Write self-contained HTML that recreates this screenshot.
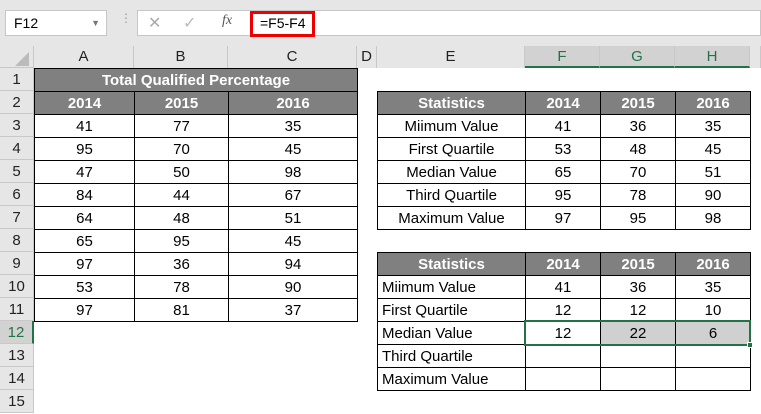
<!DOCTYPE html><html><head><style>
body{margin:0;width:761px;height:414px;overflow:hidden;background:#fff;font-family:"Liberation Sans",sans-serif;position:relative}
.a{position:absolute;box-sizing:border-box}
.t{position:absolute;border-collapse:collapse;table-layout:fixed;font-size:15px;background:#fff}
.t td{border:1px solid #000;height:22px;padding:0;text-align:center;white-space:nowrap;overflow:hidden}
.t td.h{background:#808080;color:#fff;font-weight:bold}
.t td.l{text-align:left;padding-left:4px}
.ch{position:absolute;top:46px;height:22px;border-right:1px solid #c8c8c8;background:#e6e6e6;text-align:center;font-size:15px;line-height:22px;color:#222;box-sizing:border-box}
.rh{position:absolute;left:0;width:34px;height:23px;border-bottom:1px solid #c8c8c8;border-right:1px solid #c8c8c8;background:#e6e6e6;text-align:center;font-size:15px;line-height:23px;color:#222;box-sizing:border-box}
.sel{background:#d2d2d2;color:#217346;border-bottom:2px solid #217346}
</style></head><body>
<div class="a" style="left:0;top:0;width:761px;height:46px;background:#e6e6e6"></div>
<div class="a" style="left:5px;top:10px;width:102px;height:26px;background:#fff;border:1px solid #c6c6c6;font-size:14px;line-height:24px;padding-left:8px">F12<span style="position:absolute;right:6px;top:0;font-size:9px;color:#777">▼</span></div>
<div class="a" style="left:120px;top:15px;color:#999;font-size:12px;line-height:6px">⋮</div>
<div class="a" style="left:137px;top:10px;width:624px;height:26px;background:#fff;border:1px solid #c6c6c6"></div>
<div class="a" style="left:148px;top:13px;color:#aaa;font-size:16px">✕</div>
<div class="a" style="left:183px;top:13px;color:#bbb;font-size:16px">✓</div>
<div class="a" style="left:222px;top:13px;color:#555;font-size:14px;font-style:italic;font-family:'Liberation Serif',serif">fx</div>
<div class="a" style="left:250px;top:11px;width:65px;height:26px;border:3px solid #e00;font-size:14px;line-height:19px;padding-left:7px">=F5-F4</div>
<div class="a" style="left:0;top:46px;width:34px;height:22px;background:#e6e6e6;border-right:1px solid #c8c8c8;border-bottom:1px solid #c8c8c8"></div>
<div class="a" style="left:15px;top:52px;width:0;height:0;border-left:14px solid transparent;border-bottom:14px solid #bbb"></div>
<div class="ch" style="left:34px;width:100px">A</div>
<div class="ch" style="left:134px;width:94px">B</div>
<div class="ch" style="left:228px;width:129px">C</div>
<div class="ch" style="left:357px;width:20px">D</div>
<div class="ch" style="left:377px;width:148px">E</div>
<div class="ch sel" style="left:525px;width:75px">F</div>
<div class="ch sel" style="left:600px;width:75px">G</div>
<div class="ch sel" style="left:675px;width:75px">H</div>
<div class="ch" style="left:750px;width:11px"></div>
<div class="rh" style="top:68px">1</div><div class="rh" style="top:91px">2</div><div class="rh" style="top:114px">3</div><div class="rh" style="top:137px">4</div><div class="rh" style="top:160px">5</div><div class="rh" style="top:183px">6</div><div class="rh" style="top:206px">7</div><div class="rh" style="top:229px">8</div><div class="rh" style="top:252px">9</div><div class="rh" style="top:275px">10</div><div class="rh" style="top:298px">11</div><div class="rh sel" style="top:321px;border-bottom:1px solid #c8c8c8;border-right:2px solid #217346">12</div><div class="rh" style="top:344px">13</div><div class="rh" style="top:367px">14</div><div class="rh" style="top:390px">15</div>

<table class="t" style="left:34px;top:68px;width:324px">
<col style="width:100px"><col style="width:94px"><col style="width:129px">
<tr><td class="h" colspan="3">Total Qualified Percentage</td></tr>
<tr><td class="h">2014</td><td class="h">2015</td><td class="h">2016</td></tr>
<tr><td>41</td><td>77</td><td>35</td></tr>
<tr><td>95</td><td>70</td><td>45</td></tr>
<tr><td>47</td><td>50</td><td>98</td></tr>
<tr><td>84</td><td>44</td><td>67</td></tr>
<tr><td>64</td><td>48</td><td>51</td></tr>
<tr><td>65</td><td>95</td><td>45</td></tr>
<tr><td>97</td><td>36</td><td>94</td></tr>
<tr><td>53</td><td>78</td><td>90</td></tr>
<tr><td>97</td><td>81</td><td>37</td></tr>
</table>

<table class="t" style="left:377px;top:91px;width:374px">
<col style="width:148px"><col style="width:75px"><col style="width:75px"><col style="width:75px">
<tr><td class="h">Statistics</td><td class="h">2014</td><td class="h">2015</td><td class="h">2016</td></tr>
<tr><td>Miimum Value</td><td>41</td><td>36</td><td>35</td></tr>
<tr><td>First Quartile</td><td>53</td><td>48</td><td>45</td></tr>
<tr><td>Median Value</td><td>65</td><td>70</td><td>51</td></tr>
<tr><td>Third Quartile</td><td>95</td><td>78</td><td>90</td></tr>
<tr><td>Maximum Value</td><td>97</td><td>95</td><td>98</td></tr>
</table>

<table class="t" style="left:377px;top:252px;width:374px">
<col style="width:148px"><col style="width:75px"><col style="width:75px"><col style="width:75px">
<tr><td class="h">Statistics</td><td class="h">2014</td><td class="h">2015</td><td class="h">2016</td></tr>
<tr><td class="l">Miimum Value</td><td>41</td><td>36</td><td>35</td></tr>
<tr><td class="l">First Quartile</td><td>12</td><td>12</td><td>10</td></tr>
<tr><td class="l">Median Value</td><td>12</td><td style="background:#d0d0d0">22</td><td style="background:#d0d0d0">6</td></tr>
<tr><td class="l">Third Quartile</td><td></td><td></td><td></td></tr>
<tr><td class="l">Maximum Value</td><td></td><td></td><td></td></tr>
</table>
<div class="a" style="left:524px;top:320px;width:227px;height:26px;border:2px solid #217346"></div>
<div class="a" style="left:747px;top:342px;width:6px;height:6px;background:#217346;border:1px solid #fff"></div>
</body></html>
